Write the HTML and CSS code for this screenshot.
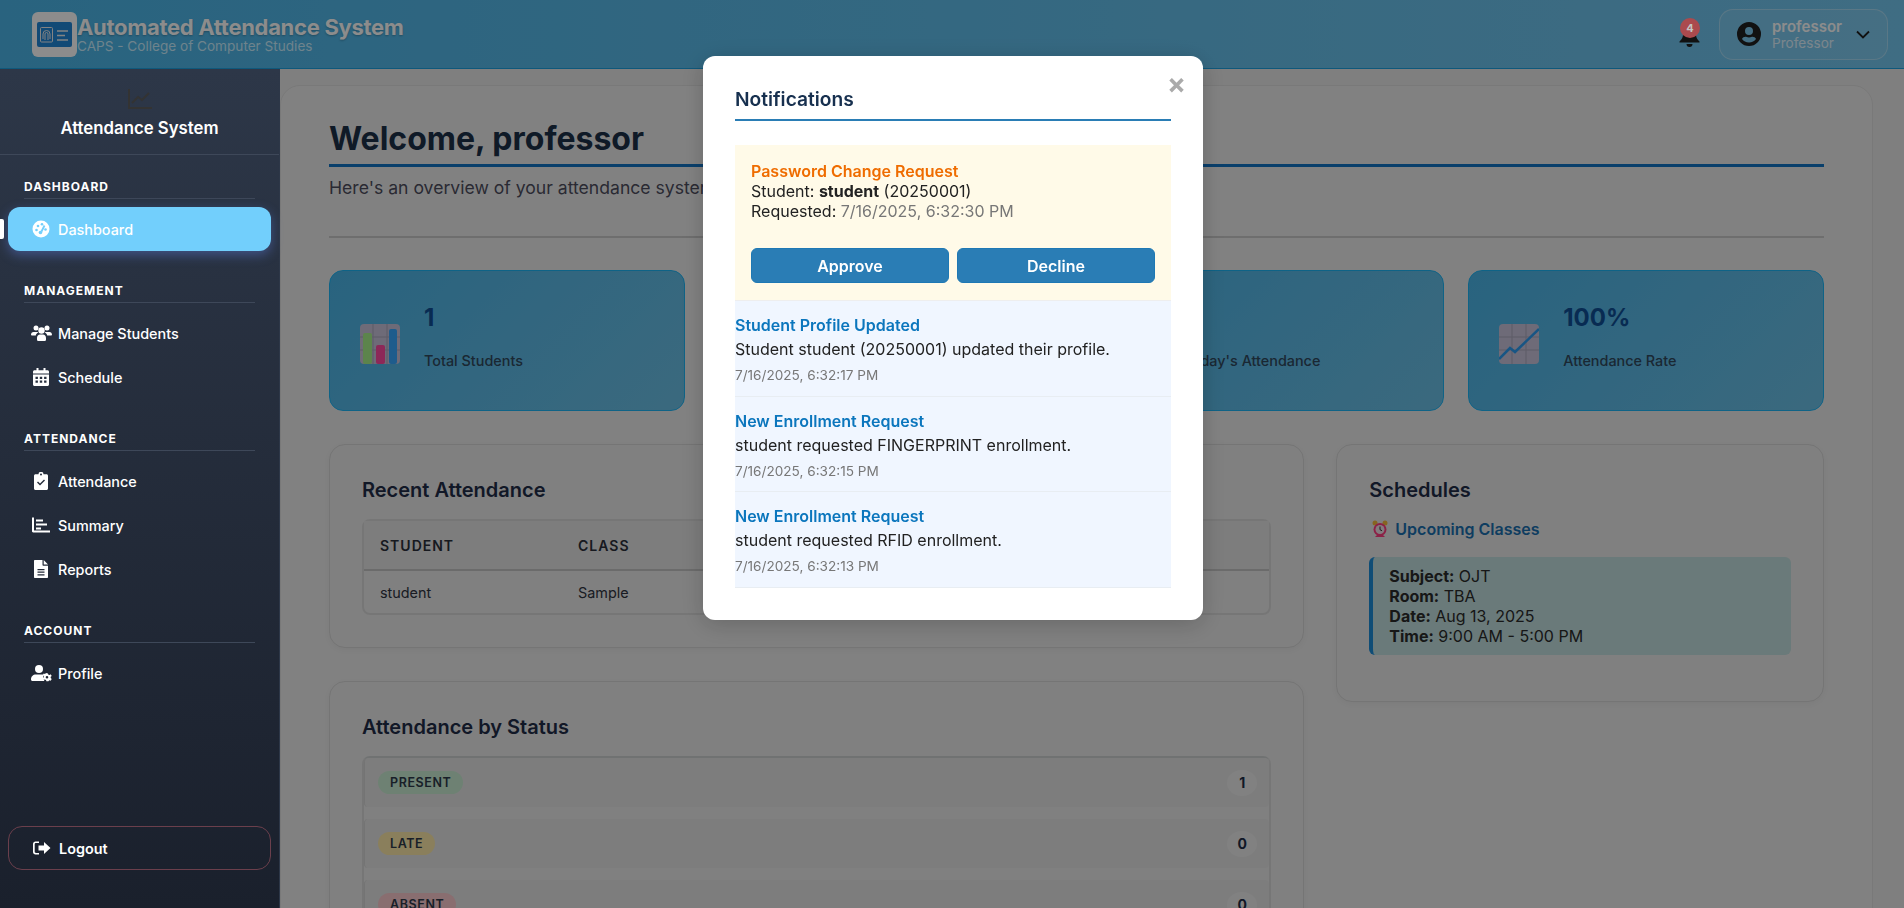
FILE: index.html
```html
<!DOCTYPE html>
<html lang="en">
<head>
  <meta charset="UTF-8" />
  <meta name="viewport" content="width=device-width, initial-scale=1.0" />
  <title>Automated Attendance System</title>
  <link rel="stylesheet" href="styles.css">
</head>
<body>
  <header class="topbar">
    <div class="brand">
      <svg class="brand-logo" viewBox="0 0 45 45">
        <rect width="45" height="45" rx="6" fill="#fff"/>
        <rect x="5" y="10" width="35" height="25" rx="2" fill="#2288d8"/>
        <rect x="8.500" y="15.500" width="12" height="14.500" rx="1" fill="none" stroke="#eee" stroke-width="1"/>
        <path d="M11 27v-5a3.500 3.500 0 0 1 7 0v5M13 28v-6a1.500 1.500 0 0 1 3 0v6" fill="none" stroke="#eee" stroke-width="1"/>
        <path d="M25 19h11M25 23.500h8M25 28h11" stroke="#eee" stroke-width="1.300"/>
      </svg>
      <div class="brand-text">
        <div class="brand-title">Automated Attendance System</div>
        <div class="brand-sub">CAPS - College of Computer Studies</div>
      </div>
    </div>
    <div class="topbar-right">
      <div class="bell">
        <svg width="21" height="24" viewBox="0 0 21 24"><path d="M10.500 4c-4 0-6.500 3-6.500 7 0 4-1.500 5.500-3.500 7.500v1h20v-1c-2-2-3.500-3.500-3.500-7.500 0-4-2.500-7-6.500-7zM7.500 21h6a3 3 0 0 1-6 0z" fill="#1f1f1f"/></svg>
        <span class="bell-badge">4</span>
      </div>
      <div class="user-box">
        <svg width="24" height="24" viewBox="0 0 24 24"><path fill-rule="evenodd" d="M12 0a12 12 0 1 0 0 24 12 12 0 0 0 0-24zm0 5a4 4 0 1 1 0 8 4 4 0 0 1 0-8zm0 15.500c-3 0-5.500-1.300-7-3.400.5-1.500 2-2.300 3.500-2.300.6 0 1.500.6 3.500.6s2.900-.6 3.500-.6c1.500 0 3 .8 3.500 2.300-1.500 2.100-4 3.400-7 3.400z" fill="#1f1f1f"/></svg>
        <div class="user-text">
          <div class="user-name">professor</div>
          <div class="user-role">Professor</div>
        </div>
        <svg class="chevron" width="14" height="9" viewBox="0 0 14 9"><path d="M1 1.500l6 6 6-6" fill="none" stroke="#1f1f1f" stroke-width="1.800"/></svg>
      </div>
    </div>
  </header>

  <div class="layout">
    <aside class="sidebar">
      <div class="sidebar-head">
        <svg width="24" height="20" viewBox="0 0 24 20"><path d="M1 0v19h23M4 14l6-6 4 3 7-7" fill="none" stroke="#333" stroke-width="2"/></svg>
        <div class="sidebar-title">Attendance System</div>
      </div>
      <nav class="sidebar-nav">
        <div class="nav-section">
          <div class="nav-label">DASHBOARD</div>
          <a class="nav-item active">
            <svg class="nav-icon" viewBox="0 0 18 18"><circle cx="9" cy="9" r="8.500" fill="#fff"/><circle cx="4.500" cy="10" r="1.300" fill="#72cffc"/><circle cx="6" cy="6" r="1.300" fill="#72cffc"/><circle cx="10" cy="4.300" r="1.300" fill="#72cffc"/><circle cx="13.500" cy="9.500" r="1.300" fill="#72cffc"/><path d="M12.500 5.500l-3 6" stroke="#72cffc" stroke-width="1.800"/><circle cx="8.500" cy="12.500" r="1.800" fill="#72cffc"/></svg>
            Dashboard
          </a>
        </div>
        <div class="nav-section">
          <div class="nav-label">MANAGEMENT</div>
          <a class="nav-item">
            <svg class="nav-icon wide" viewBox="0 0 21 16"><circle cx="5" cy="3" r="2.500" fill="#fff"/><circle cx="16" cy="3" r="2.500" fill="#fff"/><circle cx="10.500" cy="5.500" r="3.200" fill="#fff"/><path d="M0 10c0-2 1-3 2.500-3H6c.5 0 1 .2 1.200.4C6 8 5 9 4.800 10.500H1c-.6 0-1-.2-1-.5zM21 10c0-2-1-3-2.500-3H15c-.5 0-1 .2-1.200.4 1.200.6 2.200 1.600 2.400 3.100H20c.6 0 1-.2 1-.5zM6 13c0-2 1.300-3.500 3-3.500h3c1.700 0 3 1.500 3 3.500v1.500c0 .8-.5 1.500-1.200 1.500H7.200C6.500 16 6 15.300 6 14.500z" fill="#fff"/></svg>
            Manage Students
          </a>
          <a class="nav-item">
            <svg class="nav-icon" viewBox="0 0 16 18"><path fill-rule="evenodd" d="M3.500 0h2v2.200h5V0h2v2.200h2c.8 0 1.500.7 1.500 1.500v1.800H0V3.700c0-.8.700-1.500 1.500-1.500h2zM0 6.500h16v10c0 .8-.7 1.500-1.500 1.500h-13C.7 18 0 17.300 0 16.500zm2.500 2.200v2.200h2.400V8.700zm4.300 0v2.200h2.400V8.700zm4.300 0v2.200h2.400V8.700zm-8.600 3.800v2.200h2.400v-2.200zm4.300 0v2.200h2.400v-2.200zm4.300 0v2.200h2.400v-2.200z" fill="#fff"/></svg>
            Schedule
          </a>
        </div>
        <div class="nav-section">
          <div class="nav-label">ATTENDANCE</div>
          <a class="nav-item">
            <svg class="nav-icon" viewBox="0 0 14 18"><path fill-rule="evenodd" d="M1.500 2.300H4.500a2.500 2.500 0 0 1 5 0h3c.8 0 1.500.7 1.500 1.500v12.700c0 .8-.7 1.500-1.500 1.500h-11C.7 18 0 17.300 0 16.500V3.800c0-.8.700-1.500 1.500-1.500zM7 1.400a1 1 0 1 0 0 2 1 1 0 0 0 0-2zM3 10.500l3 3 5-5-1-1-4 4-2-2z" fill="#fff"/></svg>
            Attendance
          </a>
          <a class="nav-item">
            <svg class="nav-icon" viewBox="0 0 18 15"><path d="M0 0h2v13h16v2H1.200C.5 15 0 14.500 0 13.800zM4 2h7v2H4zM4 6h11v2H4zM4 10h5v2H4z" fill="#fff"/></svg>
            Summary
          </a>
          <a class="nav-item">
            <svg class="nav-icon" viewBox="0 0 14 18"><path fill-rule="evenodd" d="M1 0h7.500v5c0 .4.300.7.700.7H14v11.300c0 .6-.4 1-1 1H1c-.6 0-1-.4-1-1V1c0-.6.400-1 1-1zm8.700 0L14 4.400H9.700zM3.500 9v1.200h7V9zm0 2.600v1.200h7v-1.200zm0 2.600v1.200h7v-1.200z" fill="#fff"/></svg>
            Reports
          </a>
        </div>
        <div class="nav-section">
          <div class="nav-label">ACCOUNT</div>
          <a class="nav-item">
            <svg class="nav-icon wide" viewBox="0 0 21 16"><circle cx="8" cy="4" r="4" fill="#fff"/><path d="M5 9.500h6c.5 0 1 .1 1.400.3-.5 1-.4 2 0 3 .1 1.100.4 2.200 1 3.200H1.500C.7 16 0 15.300 0 14.500 0 11.500 2 9.500 5 9.500z" fill="#fff"/><path fill-rule="evenodd" d="M17 8.500l.4 1.300 1.300.3 1-.9 1 1.700-1 .9v1.300l1 .9-1 1.700-1.300-.4-1 .9h-2l-.4-1.300-1.300-.3-1 .4-1-1.700 1-.9v-1.300l-1-.9 1-1.700 1.300.4 1-.9zM16 11a1.300 1.300 0 1 0 0 2.600 1.300 1.300 0 0 0 0-2.600z" fill="#fff"/></svg>
            Profile
          </a>
        </div>
      </nav>
      <a class="logout">
        <svg class="nav-icon" viewBox="0 0 18 15"><path d="M6 1v1.500H3c-.8 0-1.300.5-1.300 1.200v7.600c0 .7.500 1.200 1.300 1.200h3V14H2.500C1.100 14 0 12.900 0 11.500v-8C0 2.100 1.100 1 2.500 1zM11 1.500l6.500 6-6.500 6V10H5.500V5H11z" fill="#fff"/></svg>
        Logout
      </a>
    </aside>

    <main class="main">
      <div class="panel">
        <h1 class="welcome">Welcome, professor</h1>
        <p class="welcome-sub">Here's an overview of your attendance system</p>
        <div class="stats">
          <div class="stat-card">
            <svg class="stat-icon" viewBox="0 0 40 40">
              <rect width="40" height="40" rx="4" fill="#c8c3da"/>
              <path d="M0 13h40M0 26h40M13 0v40M27 0v40" stroke="#aaa6bc" stroke-width="1"/>
              <rect x="3" y="9" width="9" height="31" rx="2" fill="#a8f08a"/>
              <rect x="16" y="21" width="9" height="19" rx="2" fill="#ff4aa0"/>
              <rect x="29" y="5" width="8" height="35" rx="2" fill="#38a8ff"/>
            </svg>
            <div class="stat-body">
              <div class="stat-value">1</div>
              <div class="stat-label">Total Students</div>
            </div>
          </div>
          <div class="stat-card"></div>
          <div class="stat-card">
            <div class="stat-spacer"></div>
            <div class="stat-body">
              <div class="stat-value">&nbsp;</div>
              <div class="stat-label">Today's Attendance</div>
            </div>
          </div>
          <div class="stat-card">
            <svg class="stat-icon" viewBox="0 0 40 40">
              <rect width="40" height="40" rx="4" fill="#c8c3da"/>
              <path d="M0 13h40M0 26h40M13 0v40M27 0v40" stroke="#aaa6bc" stroke-width="1"/>
              <path d="M0 35l11-11 5 4L40 5" fill="none" stroke="#2c9cf0" stroke-width="2.500"/>
            </svg>
            <div class="stat-body">
              <div class="stat-value">100%</div>
              <div class="stat-label">Attendance Rate</div>
            </div>
          </div>
        </div>

        <div class="columns">
          <div class="col-main">
            <section class="card">
              <h2 class="card-title">Recent Attendance</h2>
              <table class="att-table">
                <thead>
                  <tr><th>STUDENT</th><th>CLASS</th><th></th><th></th></tr>
                </thead>
                <tbody>
                  <tr><td>student</td><td>Sample</td><td></td><td></td></tr>
                </tbody>
              </table>
            </section>
            <section class="card">
              <h2 class="card-title">Attendance by Status</h2>
              <div class="status-list">
                <div class="status-row"><span class="pill pill-present">PRESENT</span><span class="count">1</span></div>
                <div class="status-row"><span class="pill pill-late">LATE</span><span class="count">0</span></div>
                <div class="status-row"><span class="pill pill-absent">ABSENT</span><span class="count">0</span></div>
              </div>
            </section>
          </div>
          <section class="card schedules">
            <h2 class="card-title">Schedules</h2>
            <div class="upcoming">
              <svg width="16" height="18" viewBox="0 0 16 18">
                <circle cx="3" cy="3" r="2.500" fill="#f5b83c"/><circle cx="13" cy="3" r="2.500" fill="#f5b83c"/>
                <circle cx="8" cy="9.500" r="6.500" fill="#ff3d80"/><circle cx="8" cy="9.500" r="4.500" fill="#f0e0e8"/>
                <path d="M8 6.500v3.200l2 1" fill="none" stroke="#333" stroke-width="1"/>
                <path d="M3 17l2-2h6l2 2z" fill="#ff3d80"/>
              </svg>
              Upcoming Classes
            </div>
            <div class="class-item">
              <div><strong>Subject:</strong> OJT</div>
              <div><strong>Room:</strong> TBA</div>
              <div><strong>Date:</strong> Aug 13, 2025</div>
              <div><strong>Time:</strong> 9:00 AM - 5:00 PM</div>
            </div>
          </section>
        </div>
      </div>
    </main>
  </div>

  <div class="overlay">
    <div class="modal">
      <span class="modal-close">&times;</span>
      <h3 class="modal-title">Notifications</h3>
      <div class="note-request">
        <div class="request-title">Password Change Request</div>
        <div>Student: <strong>student</strong> (20250001)</div>
        <div>Requested: <span class="muted">7/16/2025, 6:32:30 PM</span></div>
        <div class="request-actions">
          <button>Approve</button>
          <button>Decline</button>
        </div>
      </div>
      <div class="note">
        <div class="note-title">Student Profile Updated</div>
        <div class="note-text">Student student (20250001) updated their profile.</div>
        <div class="note-time">7/16/2025, 6:32:17 PM</div>
      </div>
      <div class="note">
        <div class="note-title">New Enrollment Request</div>
        <div class="note-text">student requested FINGERPRINT enrollment.</div>
        <div class="note-time">7/16/2025, 6:32:15 PM</div>
      </div>
      <div class="note">
        <div class="note-title">New Enrollment Request</div>
        <div class="note-text">student requested RFID enrollment.</div>
        <div class="note-time">7/16/2025, 6:32:13 PM</div>
      </div>
    </div>
  </div>
</body>
</html>
```

FILE: styles.css
```css
* {
  margin: 0;
  padding: 0;
  box-sizing: border-box;
  font-family: 'Inter', 'Liberation Sans', sans-serif;
}

html, body {
  height: 100%;
  overflow: hidden;
}

body {
  display: flex;
  flex-direction: column;
  background: #e7e7e7;
}

/* top bar */
.topbar {
  height: 69px;
  flex-shrink: 0;
  display: flex;
  justify-content: space-between;
  align-items: center;
  padding: 0 16px 0 32px;
  background: linear-gradient(90deg, #4bb5e8, #74c6ee);
  border-bottom: 1px solid #1ca0e0;
}

.brand {
  display: flex;
  align-items: center;
}

.brand-logo {
  width: 45px;
  height: 45px;
}

.brand-title {
  font-size: 22px;
  font-weight: 700;
  line-height: 24px;
  color: #fff;
  text-shadow: 0 1px 2px rgba(0, 0, 0, 0.25);
  letter-spacing: -0.3px;
}

.brand-sub {
  font-size: 13.6px;
  line-height: 15px;
  color: #c8eeff;
}

.topbar-right {
  display: flex;
  align-items: center;
  gap: 19px;
}

.bell {
  position: relative;
  width: 21px;
  height: 24px;
  margin-top: 2px;
}

.bell-badge {
  position: absolute;
  z-index: 150;
  left: 1px;
  top: -5px;
  width: 20px;
  height: 20px;
  border-radius: 50%;
  background: #ab4a4e;
  color: #c4c4c4;
  font-size: 11px;
  font-weight: 700;
  text-align: center;
  line-height: 20px;
}

.user-box {
  width: 169px;
  height: 51px;
  display: flex;
  align-items: center;
  padding: 0 17px;
  border: 1px solid rgba(255, 255, 255, 0.3);
  border-radius: 14px;
  background: rgba(255, 255, 255, 0.08);
}

.user-text {
  margin-left: 11px;
  flex: 1;
}

.user-name {
  font-size: 15px;
  font-weight: 600;
  line-height: 17px;
  color: #fff;
}

.user-role {
  font-size: 13.6px;
  line-height: 16px;
  color: #e0f4ff;
}

/* sidebar */
.layout {
  flex: 1;
  display: flex;
  min-height: 0;
}

.sidebar {
  position: relative;
  z-index: 200;
  width: 280px;
  flex-shrink: 0;
  display: flex;
  flex-direction: column;
  background: linear-gradient(180deg, #2d3748, #1a202c);
  border-right: 1px solid #2d3748;
  color: #fff;
}

.sidebar-head {
  height: 86px;
  padding-top: 20px;
  text-align: center;
  border-bottom: 1px solid #3e4859;
}

.sidebar-head svg {
  display: block;
  margin: 0 auto 9px;
}

.sidebar-title {
  font-size: 16.8px;
  font-weight: 600;
  line-height: 20px;
}

.sidebar-nav {
  flex: 1;
  padding-top: 24px;
}

.nav-section {
  margin-bottom: 32px;
}

.nav-label {
  margin: 0 24px 8px;
  padding-bottom: 4px;
  font-size: 12px;
  font-weight: 700;
  line-height: 15px;
  letter-spacing: 1px;
  border-bottom: 1px solid #3e4859;
}

.nav-item {
  position: relative;
  height: 44px;
  margin: 0 8px;
  padding-left: 24px;
  display: flex;
  align-items: center;
  gap: 8px;
  font-size: 14.4px;
  font-weight: 500;
  border-radius: 12px;
}

.nav-item.active {
  background: #72cffc;
  box-shadow: 0 4px 12px rgba(99, 135, 240, 0.4);
}

.nav-item.active::before {
  content: "";
  position: absolute;
  left: -8px;
  top: 12px;
  width: 4px;
  height: 20px;
  border-radius: 0 2px 2px 0;
  background: #fff;
}

.nav-icon {
  width: 18px;
  height: 18px;
  flex-shrink: 0;
}

.nav-icon.wide {
  width: 21px;
  margin-left: -1px;
  margin-right: -2px;
}

.logout {
  height: 44px;
  margin: 0 8px 38px;
  padding-left: 24px;
  display: flex;
  align-items: center;
  gap: 8px;
  font-size: 14.4px;
  font-weight: 600;
  border: 1px solid #6b3f4c;
  border-radius: 14px;
}

/* main content */
.main {
  flex: 1;
  min-width: 0;
  padding: 16px 31px 0 0;
  overflow: hidden;
}

.panel {
  padding: 34px 48px 32px;
  border: 1px solid #dcdcdc;
  border-radius: 20px;
  background: #ececec;
}

.welcome {
  padding-bottom: 7px;
  font-size: 32px;
  font-weight: 700;
  line-height: 37px;
  color: #1c3048;
  border-bottom: 3px solid #1273c3;
}

.welcome-sub {
  margin-top: 11px;
  padding-bottom: 38px;
  font-size: 17.6px;
  line-height: 20px;
  color: #4d4d5d;
  border-bottom: 2px solid #c8c8c8;
}

.stats {
  margin-top: 32px;
  display: grid;
  grid-template-columns: repeat(4, 1fr);
  gap: 24px;
}

.stat-card {
  height: 141px;
  display: flex;
  align-items: center;
  gap: 24px;
  padding: 6px 30px 0;
  border: 1px solid #1cb4f4;
  border-radius: 14px;
  background: linear-gradient(135deg, #4bb5e8, #6cc0e6);
}

.stat-icon,
.stat-spacer {
  width: 40px;
  height: 40px;
}

.stat-body {
  margin-top: -8px;
}

.stat-value {
  font-size: 24px;
  font-weight: 700;
  line-height: 30px;
  color: #0f4f96;
  margin-bottom: 13px;
}

.stat-label {
  font-size: 14.4px;
  font-weight: 500;
  line-height: 30px;
  color: #31495e;
}

.columns {
  margin-top: 33px;
  display: grid;
  grid-template-columns: 2fr 1fr;
  gap: 32px;
  align-items: start;
}

.col-main {
  display: flex;
  flex-direction: column;
  gap: 33px;
}

.card {
  padding: 32px;
  border: 1px solid #d5d5d5;
  border-radius: 16px;
  background: #e9e9e9;
  box-shadow: 0 2px 8px rgba(0, 0, 0, 0.05);
}

.card-title {
  font-size: 20px;
  font-weight: 600;
  line-height: 26px;
  margin-bottom: 16px;
  color: #1f2c47;
}

.att-table {
  width: 100%;
  table-layout: fixed;
  border-collapse: separate;
  border-spacing: 0;
  border: 2px solid #d8d8d8;
  border-radius: 8px;
}

.att-table th {
  height: 50px;
  padding-left: 16px;
  text-align: left;
  font-size: 14px;
  font-weight: 600;
  letter-spacing: 1px;
  color: #2a2f3a;
  background: #e3e3e3;
  border-bottom: 2px solid #c4c4c4;
}

.att-table td {
  height: 42px;
  padding-left: 16px;
  font-size: 14.4px;
  color: #2f3340;
}

.att-table th:nth-child(1),
.att-table th:nth-child(2) {
  width: 198px;
}

.status-list {
  display: flex;
  flex-direction: column;
  gap: 12px;
  border-top: 2px solid #ccd0d0;
  border-left: 2px solid #d8d8d8;
  border-right: 2px solid #d8d8d8;
  border-radius: 8px;
}

.status-row {
  height: 49px;
  display: flex;
  justify-content: space-between;
  align-items: center;
  padding: 0 12px 0 13px;
  border-left: 1px solid #d4d4d4;
  border-radius: 4px;
  background: #e4e4e4;
}

.pill {
  height: 23px;
  padding: 0 12px;
  display: flex;
  align-items: center;
  font-size: 12.5px;
  font-weight: 600;
  letter-spacing: 0.6px;
  color: #2e3a4a;
  border-radius: 12px;
}

.pill-present { background: #c8ecd2; }
.pill-late { background: #fbe8a8; }
.pill-absent { background: #fac8cc; }

.count {
  min-width: 30px;
  height: 26px;
  display: flex;
  justify-content: center;
  align-items: center;
  font-size: 14px;
  font-weight: 700;
  color: #1f2c47;
  border-radius: 50%;
  background: #ececec;
}

.schedules {
  min-height: 258px;
}

.upcoming {
  display: flex;
  align-items: center;
  gap: 7px;
  padding-left: 3px;
  margin-top: -2px;
  margin-bottom: 16px;
  font-size: 16px;
  font-weight: 600;
  line-height: 24px;
  color: #1a70b0;
}

.class-item {
  padding: 9px 16px;
  font-size: 16px;
  line-height: 20px;
  color: #2a2a2a;
  border-left: 4px solid #1c8cd8;
  border-radius: 6px;
  background: #c1dede;
}

/* notifications modal */
.overlay {
  position: fixed;
  top: 0;
  left: 0;
  right: 0;
  bottom: 0;
  z-index: 100;
  display: flex;
  justify-content: center;
  align-items: flex-start;
  padding: 56px 0 0 2px;
  background: rgba(0, 0, 0, 0.45);
}

.modal {
  position: relative;
  width: 500px;
  height: 564px;
  padding: 20px 32px 32px;
  border-radius: 12px;
  background: #fff;
  box-shadow: 0 4px 24px rgba(0, 0, 0, 0.2);
}

.modal-close {
  position: absolute;
  right: 17px;
  top: 9px;
  font-size: 28px;
  font-weight: 700;
  line-height: 38px;
  color: #aaa;
}

.modal-title {
  height: 45px;
  padding-top: 10px;
  font-size: 19.2px;
  font-weight: 600;
  line-height: 27px;
  color: #17304f;
  border-bottom: 2px solid #2a7db5;
  margin-bottom: 24px;
}

.note-request {
  height: 156px;
  padding: 17px 16px 16px;
  font-size: 16px;
  line-height: 20px;
  color: #222;
  background: #fffae8;
  border-bottom: 1px solid #eee;
}

.request-title {
  font-weight: 600;
  line-height: 19px;
  color: #ef6c00;
}

.muted {
  color: #777;
}

.request-actions {
  margin-top: 27px;
  display: flex;
  gap: 8px;
}

.request-actions button {
  flex: 1;
  height: 35px;
  font-size: 16px;
  font-weight: 600;
  color: #fff;
  background: #2a7db5;
  border: 1px solid #1e78b4;
  border-radius: 6px;
}

.note {
  height: 95.5px;
  padding-top: 12px;
  background: #f0f6ff;
  border-bottom: 1px solid #e8edf2;
}

.note-title {
  font-size: 16px;
  font-weight: 600;
  line-height: 24px;
  color: #0b76bd;
}

.note-text {
  font-size: 16px;
  line-height: 25px;
  color: #222;
}

.note-time {
  font-size: 13.6px;
  line-height: 26px;
  color: #777;
}
```
